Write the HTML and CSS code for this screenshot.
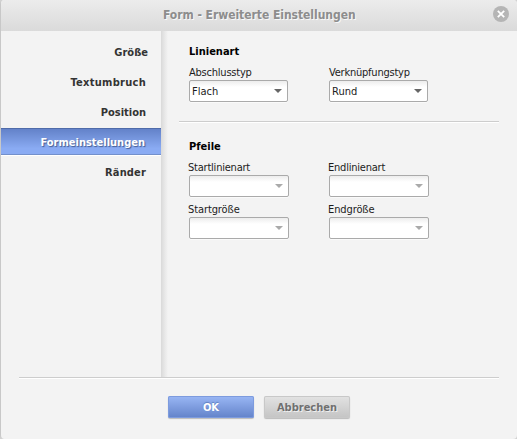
FILE: index.html
```html
<!DOCTYPE html>
<html lang="de">
<head>
<meta charset="utf-8">
<title>Form - Erweiterte Einstellungen</title>
<link rel="stylesheet" href="styles.css">
</head>
<body>
<div class="dialog">
  <header class="titlebar">
    <h1>Form - Erweiterte Einstellungen</h1>
    <svg class="close" width="16" height="16" viewBox="0 0 16 16"><circle cx="8" cy="8" r="8" fill="#b5b5b5"/><path d="M4.8 4.8l6.4 6.4M11.2 4.8l-6.4 6.4" stroke="#fff" stroke-width="1.8"/></svg>
  </header>
  <div class="main">
    <nav class="sidebar">
      <a class="item size"><span>Größe</span></a>
      <a class="item wrap"><span>Textumbruch</span></a>
      <a class="item pos"><span>Position</span></a>
      <a class="item shape active"><span>Formeinstellungen</span></a>
      <a class="item edges"><span>Ränder</span></a>
    </nav>
    <div class="content">
      <section class="group">
        <h2>Linienart</h2>
        <div class="fields">
          <div class="field"><label>Abschlusstyp</label><div class="select"><span>Flach</span><i></i></div></div>
          <div class="field"><label>Verknüpfungstyp</label><div class="select"><span>Rund</span><i></i></div></div>
        </div>
      </section>
      <section class="group arrows">
        <h2>Pfeile</h2>
        <div class="fields">
          <div class="field"><label>Startlinienart</label><div class="select disabled"><i></i></div></div>
          <div class="field"><label>Endlinienart</label><div class="select disabled"><i></i></div></div>
          <div class="field"><label class="l-size">Startgröße</label><div class="select disabled"><i></i></div></div>
          <div class="field"><label class="l-size">Endgröße</label><div class="select disabled"><i></i></div></div>
        </div>
      </section>
    </div>
  </div>
  <footer class="footer">
    <div class="button primary"><span>OK</span></div>
    <div class="button"><span>Abbrechen</span></div>
  </footer>
</div>
</body>
</html>
```
FILE: styles.css
```css
* { box-sizing: border-box; }
body { margin: 0; background: #d2d2d2; font-family: "DejaVu Sans Condensed", "DejaVu Sans", sans-serif; font-stretch: condensed; font-size: 11px; color: #1c1c1c; }
.dialog { width: 517px; height: 439px; background: #f3f3f3; border-left: 1px solid #c8c8c8; border-radius: 4px; overflow: hidden; }
.titlebar { height: 31px; background: linear-gradient(#ececec, #dadada); display: flex; align-items: center; justify-content: flex-end; padding: 0 8px 3px 0; }
h1 { flex: 1; margin: 1px 0 0 162px; font-size: 12px; line-height: 16px; font-weight: bold; letter-spacing: -0.04px; color: #8d8d8d; text-shadow: 1px 1px #f8f8f8; white-space: nowrap; }
.main { display: flex; height: 346px; }
.sidebar { width: 160px; padding-top: 7px; }
.item { display: flex; align-items: center; justify-content: flex-end; height: 28px; margin-bottom: 2px; padding-right: 15px; font-weight: bold; color: #333; }
.item.active { color: #fff; background: linear-gradient(#6382c9, #8aabf3 75%); border-top: 1px solid #4f6ba9; border-bottom: 1px solid #fff; box-shadow: inset 0 -1px #7390cb; text-shadow: 1px 1px 1px #435c93; padding-right: 16px; }
.item.size { padding-right: 13px; }
.item.wrap { letter-spacing: 0.28px; }
.item.edges { letter-spacing: 0.15px; }
.content { flex: 1; background: linear-gradient(90deg, #d9d9d9, #e5e5e5 3px, #f3f3f3 7px); padding-left: 18px; }
.group { width: 320px; height: 91px; padding: 13px 0 0 10px; border-bottom: 1px solid #cdcdcd; box-shadow: 0 1px #fff; }
.group.arrows { height: 200px; padding-top: 17px; border: 0; box-shadow: none; }
h2 { margin: 0; font-size: 11px; line-height: 16px; color: #000; }
.fields { display: grid; grid-template-columns: 100px 100px; column-gap: 40px; row-gap: 5px; padding-top: 4px; }
.field { height: 37px; }
label { display: block; line-height: 17px; height: 16px; letter-spacing: -0.22px; white-space: nowrap; }
label.l-size { letter-spacing: -0.1px; }
.arrows label { margin-left: -1px; }
.select { width: 99px; height: 22px; display: flex; align-items: center; justify-content: flex-end; padding: 0 5px 0 2px; border: 1px solid #aaa; border-radius: 2px; background: linear-gradient(#ededed, #fff 6px); box-shadow: 0 1px #fafafa; }
.select span { flex: 1; }
.select i { border: 4px solid transparent; border-top-color: #666; border-bottom: 0; }
.select.disabled { width: 100px; }
.disabled i { border-top-color: #aaa; }
.footer { width: 480px; height: 62px; margin-left: 18px; border-top: 1px solid #cdcdcd; box-shadow: inset 0 1px #fff; padding: 18px 0 0 149px; display: flex; gap: 10px; }
.button { width: 86px; height: 22px; display: flex; align-items: center; justify-content: center; font-weight: bold; border-radius: 2px; color: #707070; background: linear-gradient(#e3e3e3, #c4c4c4); box-shadow: 0 1px 1px #bbb, inset 0 0 0 1px #c8c8c8; text-shadow: 1px 1px #eee; }
.button.primary { color: #fff; background: linear-gradient(#9ab7f5, #6282c9); box-shadow: 0 1px 1px #bbb, inset 0 0 0 1px #7d9bde; text-shadow: 0 -1px 1px #5f7fbf; }
```
